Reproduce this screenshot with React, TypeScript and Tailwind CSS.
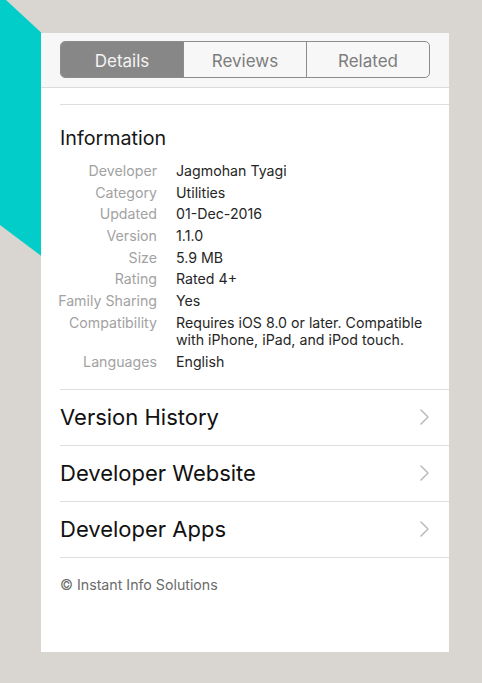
import React from "react";

const info: [string, string][] = [
  ["Developer", "Jagmohan Tyagi"],
  ["Category", "Utilities"],
  ["Updated", "01-Dec-2016"],
  ["Version", "1.1.0"],
  ["Size", "5.9 MB"],
  ["Rating", "Rated 4+"],
  ["Family Sharing", "Yes"],
  ["Compatibility", "Requires iOS 8.0 or later. Compatible with iPhone, iPad, and iPod touch."],
  ["Languages", "English"],
];

function Chevron() {
  return (
    <svg width="9" height="16" viewBox="0 0 9 16" fill="none">
      <path d="M1 1l7 7-7 7" stroke="#bdbdbd" strokeWidth="1.6" strokeLinecap="round" strokeLinejoin="round" />
    </svg>
  );
}

export default function App() {
  const font = { fontFamily: "Inter, 'Noto Sans', 'Liberation Sans', sans-serif" };
  return (
    <div className="relative w-[482px] h-[683px] bg-[#d9d6d1] overflow-hidden" style={font}>
      <svg className="absolute left-0 top-0" width="60" height="280" viewBox="0 0 60 280">
        <polygon points="0,0 6,0 60,50 60,270 0,225" fill="#02cdc9" />
      </svg>
      <div className="relative ml-[41px] mt-[33px] w-[408px] h-[619px] bg-white flex flex-col">
        <div className="h-[55px] bg-[#f7f7f7] border-b border-[#dcdcdc] pt-[8px] px-[19px]">
          <div className="flex h-[37px] w-[370px] rounded-[5px] border border-[#8c8c8c] overflow-hidden text-[17px] leading-[20px]">
            <div className="w-[122px] flex items-center justify-center pt-[2px] bg-[#878787] text-[#f3f3f3]">Details</div>
            <div className="w-[123px] flex items-center justify-center pt-[2px] border-l border-[#8c8c8c] text-[#7d7d7d]">Reviews</div>
            <div className="flex-1 flex items-center justify-center pt-[2px] border-l border-[#8c8c8c] text-[#7d7d7d]">Related</div>
          </div>
        </div>
        <div className="ml-[19px] mt-[16px] border-t border-[#dedede]" />
        <div className="px-[19px] pt-[20px]">
          <div className="text-[19.7px] leading-[26px] text-[#161616]">Information</div>
          <div className="mt-[11px] flex flex-col gap-[4.7px] text-[14.2px] leading-[17px]">
            {info.map(([k, v]) => (
              <div key={k} className="flex">
                <div className="w-[97px] shrink-0 text-right whitespace-nowrap flex justify-end text-[#a2a2a2]">{k}</div>
                <div className="ml-[19px] text-[#262626]">{v}</div>
              </div>
            ))}
          </div>
        </div>
        <div className="ml-[19px] mt-[19px]">
          {["Version History", "Developer Website", "Developer Apps"].map((t) => (
            <div key={t} className="h-[56px] border-t border-[#dedede] flex items-center justify-between pr-[20px]">
              <span className="text-[22px] text-[#111]">{t}</span>
              <Chevron />
            </div>
          ))}
          <div className="border-t border-[#dedede] pt-[18px] text-[14.2px] leading-[18px] text-[#6b6b6b]">© Instant Info Solutions</div>
        </div>
      </div>
    </div>
  );
}
